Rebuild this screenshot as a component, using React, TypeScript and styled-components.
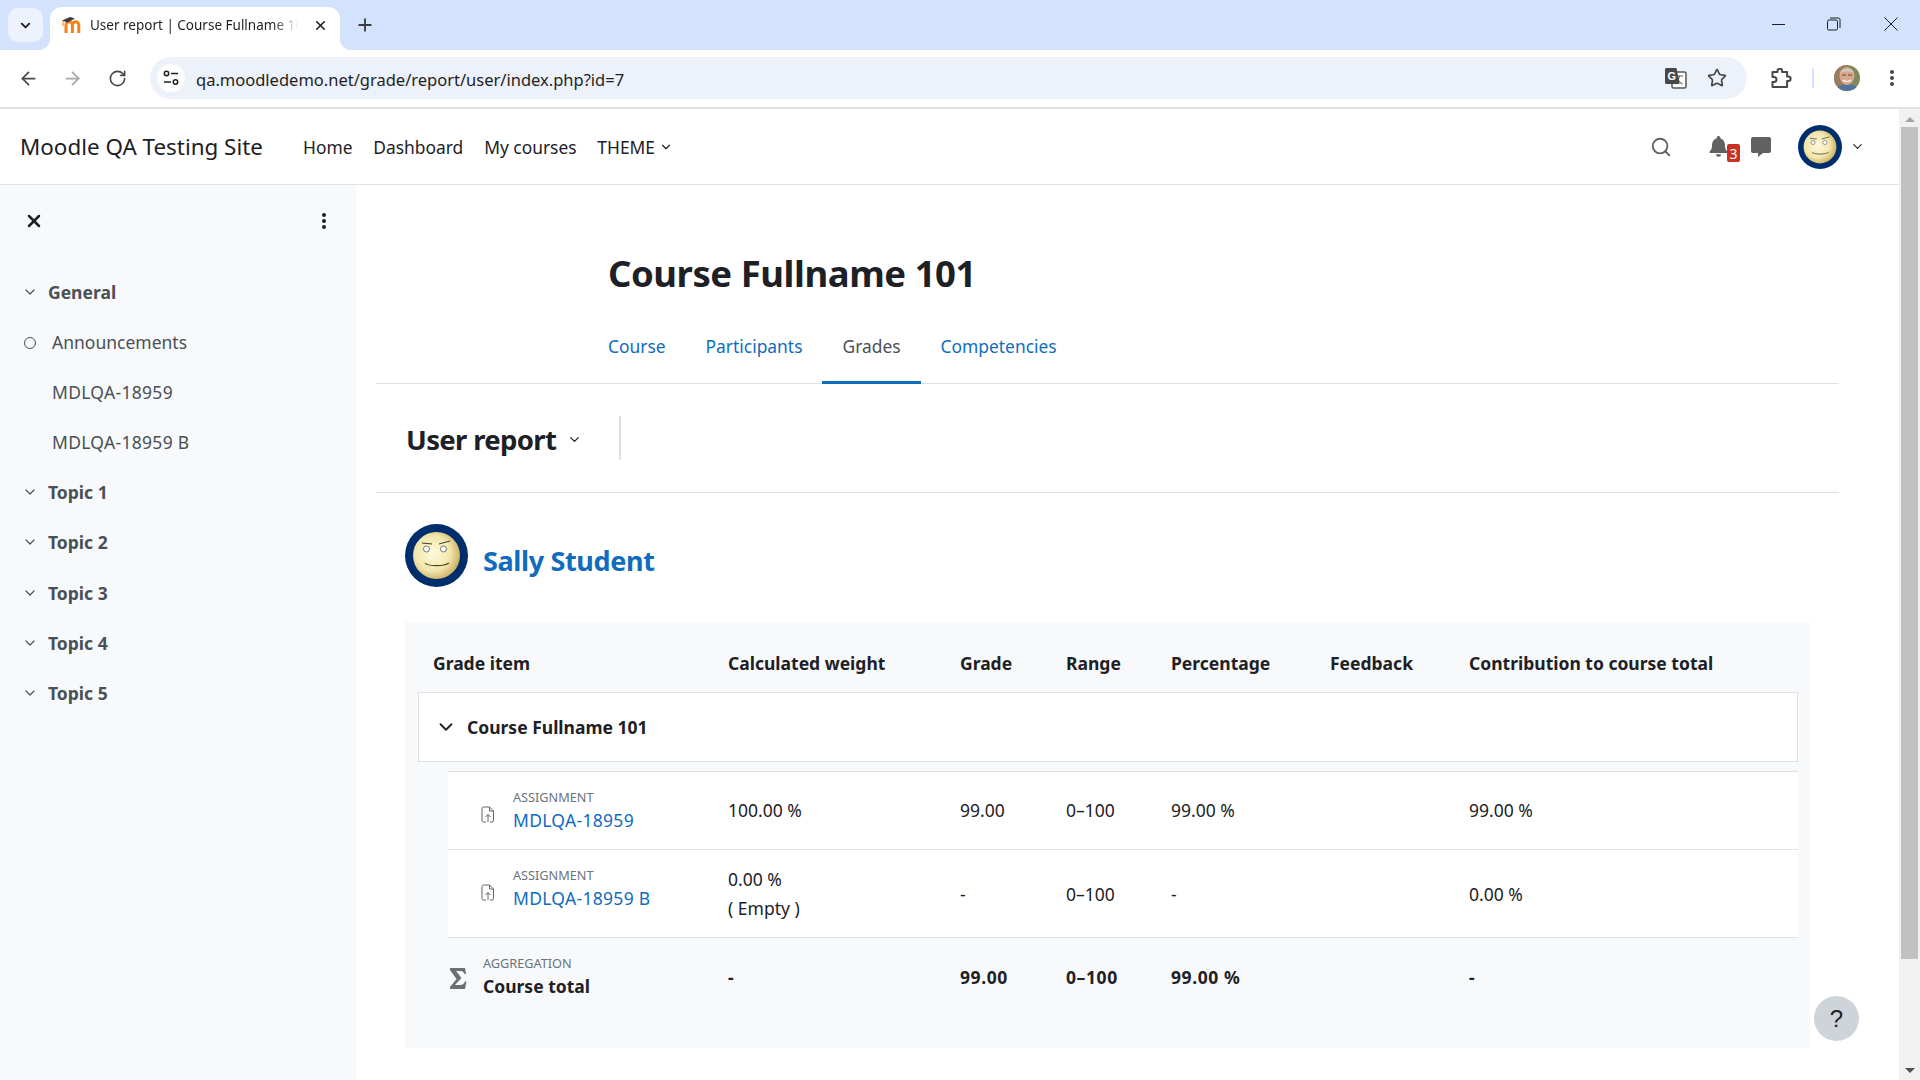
import React from 'react';
import styled, { createGlobalStyle } from 'styled-components';
import { ArrowLeft, ArrowRight, ChevronDown, Plus, RotateCw, Search, Star, X } from 'lucide-react';

const FONT = '"Noto Sans", "Open Sans", sans-serif';

const GlobalStyle = createGlobalStyle`
  html, body {
    margin: 0;
    height: 100%;
    overflow: hidden;
    background: #ffffff;
    color: #1d2125;
    font-family: ${FONT};
  }
  * { box-sizing: border-box; }
`;

const Shell = styled.div`
  display: flex;
  flex-direction: column;
  width: 1920px;
  height: 1080px;
  overflow: hidden;
`;

/* browser chrome */
const TabStrip = styled.div`
  display: flex;
  align-items: flex-start;
  height: 50px;
  padding: 7px 0 0 8px;
  background: #d3e3fd;
`;

const TabSearch = styled.div`
  display: flex;
  align-items: center;
  justify-content: center;
  width: 35px;
  height: 34px;
  margin-top: 1px;
  border-radius: 10px;
  background: #edf2fc;
  color: #1f1f1f;
`;

const Tab = styled.div`
  position: relative;
  display: flex;
  align-items: center;
  width: 290px;
  height: 43px;
  margin-left: 7px;
  padding: 0 12px 7px 10px;
  border-radius: 12px 12px 0 0;
  background: #ffffff;
  &::before, &::after {
    content: '';
    position: absolute;
    bottom: 0;
    width: 12px;
    height: 12px;
  }
  &::before {
    left: -12px;
    background: radial-gradient(circle at 0 0, transparent 12px, #ffffff 12.5px);
  }
  &::after {
    right: -12px;
    background: radial-gradient(circle at 100% 0, transparent 12px, #ffffff 12.5px);
  }
`;

const TabTitle = styled.span`
  flex: 1;
  margin: 0 15px 0 8px;
  overflow: hidden;
  white-space: nowrap;
  font-size: 13.5px;
  color: #1f1f1f;
  -webkit-mask-image: linear-gradient(to right, #000 88%, transparent);
  mask-image: linear-gradient(to right, #000 88%, transparent);
`;

const NewTab = styled.div`
  display: flex;
  align-items: center;
  justify-content: center;
  width: 28px;
  height: 36px;
  margin-left: 11px;
  color: #3b3b3b;
`;

const WindowControls = styled.div`
  display: flex;
  align-items: center;
  height: 34px;
  margin-left: auto;
  padding-right: 22px;
`;

const WindowGlyph = styled.svg<{ $gap?: number }>`
  margin-left: ${(p) => p.$gap ?? 0}px;
  fill: none;
  stroke: #1f1f1f;
  stroke-width: 1;
`;

const Toolbar = styled.div`
  display: flex;
  align-items: center;
  height: 59px;
  padding: 0 18px 1px 17px;
  border-bottom: 2px solid #e3e3e3;
  border-radius: 10px 10px 0 0;
  background: #ffffff;
  color: #474747;
`;

const ToolButton = styled.div<{ $muted?: boolean; $gap?: number }>`
  display: flex;
  align-items: center;
  justify-content: center;
  width: 22px;
  height: 22px;
  margin-left: ${(p) => p.$gap ?? 0}px;
  color: ${(p) => (p.$muted ? '#a8a8a8' : '#474747')};
`;

const AddressBar = styled.div`
  display: flex;
  align-items: center;
  width: 1597px;
  height: 42px;
  margin-left: 22px;
  padding: 0 19px 0 7px;
  border-radius: 21px;
  background: #ecf1fa;
`;

const SiteInfo = styled.div`
  display: flex;
  align-items: center;
  justify-content: center;
  width: 28px;
  height: 28px;
  border-radius: 50%;
  background: #ffffff;
`;

const Url = styled.span`
  flex: 1;
  margin: 2px 0 0 11px;
  font-size: 16.5px;
  color: #1f1f1f;
`;

const ToolDivider = styled.div`
  width: 2px;
  height: 20px;
  margin-left: 20px;
  background: #d3e3fd;
`;

/* page */
const Viewport = styled.div`
  position: relative;
  flex: 1;
  display: flex;
  min-height: 0;
`;

const PageArea = styled.div`
  flex: 1;
  display: flex;
  flex-direction: column;
  min-width: 0;
`;

const Scrollbar = styled.div`
  display: flex;
  flex-direction: column;
  align-items: center;
  width: 21px;
  padding: 0 2px;
  background: #f1f1f1;
`;

const ScrollArrow = styled.div<{ $down?: boolean }>`
  flex: none;
  width: 0;
  height: 0;
  margin: ${(p) => (p.$down ? 'auto 0 7px' : '8px 0 5px')};
  border-left: 5px solid transparent;
  border-right: 5px solid transparent;
  ${(p) => (p.$down ? 'border-top: 5px solid #505050;' : 'border-bottom: 5px solid #a3a3a3;')}
`;

const ScrollThumb = styled.div`
  flex: none;
  width: 17px;
  height: 832px;
  background: #c1c1c1;
`;

const Navbar = styled.header`
  display: flex;
  align-items: center;
  flex: none;
  height: 76px;
  padding: 0 0 0 20px;
  border-bottom: 1.5px solid #dee2e6;
`;

const Brand = styled.div`
  width: 283px;
  font-size: 22.4px;
  color: #1d2125;
`;

const NavLink = styled.a`
  display: flex;
  align-items: center;
  gap: 4px;
  margin-right: 20.8px;
  font-size: 17.4px;
  color: #1d2125;
`;

const NavTools = styled.div`
  display: flex;
  align-items: center;
  margin-left: auto;
  color: #616161;
`;

const IconSlot = styled.div<{ $gap?: number }>`
  position: relative;
  display: flex;
  align-items: center;
  justify-content: center;
  margin-left: ${(p) => p.$gap ?? 0}px;
`;

const Badge = styled.span`
  position: absolute;
  top: 8px;
  right: -12px;
  display: flex;
  align-items: center;
  justify-content: center;
  width: 13px;
  height: 18px;
  border-radius: 2px;
  background: #ca3120;
  color: #ffffff;
  font-size: 14px;
`;

const Layout = styled.div`
  flex: 1;
  display: flex;
  min-height: 0;
`;

const Sidebar = styled.aside`
  flex: none;
  width: 356px;
  background: #f8f9fa;
  color: #495057;
`;

const SidebarHead = styled.div`
  display: flex;
  align-items: center;
  justify-content: space-between;
  height: 82px;
  padding: 0 29px 11px 24px;
  color: #1d2125;
`;

const SectionRow = styled.div`
  display: flex;
  align-items: center;
  gap: 10px;
  height: 50.2px;
  padding-left: 22px;
  font-size: 17.5px;
  font-weight: 700;
`;

const ActivityRow = styled.div<{ $marked?: boolean; $spaced?: boolean }>`
  display: flex;
  align-items: center;
  height: 50px;
  padding-left: ${(p) => (p.$marked ? 24 : 52)}px;
  font-size: 17.5px;
  letter-spacing: ${(p) => (p.$spaced ? 0.3 : 0)}px;
`;

const ActivityDot = styled.span`
  width: 12px;
  height: 12px;
  margin: 2px 16px 0 0;
  border: 1.5px solid #495057;
  border-radius: 50%;
`;

const Main = styled.main`
  flex: 1;
  min-width: 0;
  padding: 0 60px 0 20px;
`;

const CourseHead = styled.div`
  height: 139px;
  padding: 64px 0 0 232px;
`;

const CourseTitle = styled.h1`
  margin: 0;
  font-size: 36.5px;
  line-height: 48px;
  font-weight: 700;
  letter-spacing: -0.45px;
  color: #1d2125;
`;

const Tabs = styled.nav`
  display: flex;
  height: 60px;
  padding-left: 212px;
  border-bottom: 1.5px solid #dee2e6;
`;

const TabLink = styled.a<{ $active?: boolean }>`
  height: 60px;
  padding: 9.5px 20px 0;
  font-size: 17.4px;
  line-height: 24px;
  color: ${(p) => (p.$active ? '#495057' : '#0f6cbf')};
  border-bottom: 3px solid ${(p) => (p.$active ? '#0f6cbf' : 'transparent')};
`;

const ReportBar = styled.div`
  display: flex;
  align-items: center;
  height: 109px;
  padding: 0 0 0 30px;
  border-bottom: 1.5px solid #dee2e6;
`;

const ReportTitle = styled.h2`
  display: flex;
  align-items: center;
  gap: 11px;
  width: 213px;
  margin: 3px 0 0;
  font-size: 27.5px;
  line-height: 36px;
  font-weight: 700;
  letter-spacing: -0.65px;
  color: #1d2125;
`;

const ReportDivider = styled.div`
  width: 1.5px;
  height: 44px;
  background: #dee2e6;
`;

const UserBlock = styled.div`
  display: flex;
  align-items: center;
  gap: 15px;
  padding: 31px 0 35px 29px;
`;

const UserName = styled.a`
  margin-top: 10px;
  font-size: 27px;
  line-height: 40px;
  font-weight: 700;
  letter-spacing: -0.35px;
  color: #0f6cbf;
`;

const Panel = styled.section`
  margin: 0 29px;
  padding: 0 12px 29px 13px;
  background: #f8f9fa;
`;

const GradeGrid = styled.div<{ $lead: number }>`
  display: grid;
  grid-template-columns: ${(p) => p.$lead}px 232px 106px 105px 159px 139px 1fr;
  align-items: center;
  font-size: 17.5px;
`;

const HeaderRow = styled(GradeGrid)`
  height: 70px;
  padding: 12px 0 0 15px;
  font-weight: 700;
`;

const CategoryRow = styled.div`
  display: flex;
  align-items: center;
  gap: 10px;
  height: 70px;
  margin-bottom: 9px;
  padding: 0 0 1px 16px;
  border: 1.5px solid #dee2e6;
  background: #ffffff;
  font-size: 17.5px;
  font-weight: 700;
`;

const ItemRow = styled(GradeGrid)<{ $height: number; $lift?: number }>`
  height: ${(p) => p.$height}px;
  margin-left: 30px;
  padding-bottom: ${(p) => p.$lift ?? 0}px;
  border-top: 1.5px solid #dee2e6;
  background: #ffffff;
`;

const TotalRow = styled(GradeGrid)`
  height: 82px;
  margin-left: 30px;
  padding-bottom: 3px;
  border-top: 1.5px solid #dee2e6;
  font-weight: 700;
`;

const NameCell = styled.div<{ $icon: number; $gap: number }>`
  display: flex;
  align-self: start;
  gap: ${(p) => p.$gap}px;
  padding: 16px 0 0 ${(p) => p.$icon}px;
`;

const ItemGlyph = styled.div<{ $top: number }>`
  flex: none;
  margin-top: ${(p) => p.$top}px;
  color: #5f666c;
`;

const ItemKind = styled.div`
  font-size: 12.7px;
  line-height: 18px;
  font-weight: 400;
  color: #6a737b;
`;

const ItemLink = styled.a`
  display: block;
  font-size: 17.5px;
  line-height: 28px;
  letter-spacing: 0.3px;
  color: #0f6cbf;
`;

const ItemTotal = styled.div`
  font-size: 17.5px;
  line-height: 28px;
  font-weight: 700;
  color: #1d2125;
`;

const WeightStack = styled.div`
  line-height: 29px;
`;

const TotalValue = styled.span`
  letter-spacing: 0.6px;
`;

const HelpButton = styled.div`
  position: absolute;
  right: 61px;
  bottom: 39px;
  display: flex;
  align-items: center;
  justify-content: center;
  width: 45px;
  height: 45px;
  border-radius: 50%;
  background: #ced4da;
  color: #1d2125;
  font-family: "Liberation Sans", sans-serif;
  font-size: 24px;
`;

function Smiley({ size }: { size: number }) {
  const gradId = `face-${size}`;
  return (
    <svg width={size} height={size} viewBox="0 0 63 63">
      <defs>
        <radialGradient id={gradId} cx="42%" cy="45%" r="60%">
          <stop offset="0%" stopColor="#fdf9dc" />
          <stop offset="62%" stopColor="#f3e7ae" />
          <stop offset="100%" stopColor="#c9ad5e" />
        </radialGradient>
      </defs>
      <circle cx="31.5" cy="31.5" r="31.5" fill="#002d6b" />
      <circle cx="31.5" cy="31.5" r="23.5" fill={`url(#${gradId})`} />
      <circle cx="21.5" cy="25" r="3" fill="#fff" stroke="#555" strokeWidth="0.8" />
      <circle cx="38.5" cy="25" r="3" fill="#fff" stroke="#555" strokeWidth="0.8" />
      <path d="M17 19l10 1M34 20l11-3" stroke="#3d3a2c" strokeWidth="1" fill="none" />
      <path d="M20 39c2 3 18 4 24 0" stroke="#4b4528" strokeWidth="1.1" fill="none" />
    </svg>
  );
}

function Favicon() {
  return (
    <svg width="22" height="20" viewBox="0 0 22 20">
      <path
        d="M6 18v-8a3.2 3.2 0 0 1 6.4 0v8M12.4 10a3.2 3.2 0 0 1 6.4 0v8"
        fill="none"
        stroke="#f98012"
        strokeWidth="3"
      />
      <path d="M2 5.500l8-3.500 5 1.500-7.500 4z" fill="#3a3a3a" />
      <path d="M3 6v5" stroke="#f9a65a" strokeWidth="1.500" />
    </svg>
  );
}

function TuneIcon() {
  return (
    <svg width="16" height="16" viewBox="0 0 16 16" fill="none" stroke="#1f1f1f" strokeWidth="1.500">
      <circle cx="3.500" cy="3.500" r="2.200" />
      <path d="M8 3.500h7M1 12h7" />
      <circle cx="12.500" cy="12" r="2.200" />
    </svg>
  );
}

function TranslateIcon() {
  return (
    <svg width="22" height="21" viewBox="0 0 22 21">
      <rect x="7" y="4" width="14" height="16" rx="1.500" fill="#fff" stroke="#555" strokeWidth="1.500" />
      <path d="M11 8h7M14.500 8c-.5 4-2 6-4 8M12.500 11c1 2 3 4 5 5" stroke="#555" strokeWidth="1.100" fill="none" />
      <path d="M1.500 0h10l3 16H1.500A1.500 1.500 0 0 1 0 14.500v-13A1.500 1.500 0 0 1 1.500 0z" fill="#474747" />
      <text x="2.500" y="12" fill="#fff" fontSize="11" fontWeight="700" fontFamily="Liberation Sans, sans-serif">G</text>
    </svg>
  );
}

function PuzzleIcon() {
  return (
    <svg width="21" height="21" viewBox="0 0 21 21" fill="none" stroke="#474747" strokeWidth="2" strokeLinejoin="round">
      <path d="M1.500 4h5V3a2.300 2.300 0 0 1 4.600 0v1h5v4.500h1.200a2.300 2.300 0 0 1 0 4.600h-1.200V19h-14.600v-5h1.500a2.500 2.500 0 0 0 0-5H1.500z" />
    </svg>
  );
}

function ProfilePhoto() {
  return (
    <svg width="26" height="26" viewBox="0 0 26 26">
      <defs>
        <clipPath id="profile-clip">
          <circle cx="13" cy="13" r="13" />
        </clipPath>
      </defs>
      <g clipPath="url(#profile-clip)">
        <rect width="26" height="26" fill="#7c8a5c" />
        <rect x="0" y="0" width="11" height="26" fill="#9b7b62" />
        <path d="M2 26c1-5 5-7 11-7s11 2 11 7z" fill="#53739a" />
        <ellipse cx="13" cy="11" rx="7.500" ry="9" fill="#d8a78c" />
        <path d="M6 8c1-5 12-6 14 0-4-2-10-2-14 0z" fill="#cfc9c0" />
        <path d="M8 10h4M14 10h4" stroke="#5b4a40" strokeWidth="1.200" />
        <path d="M9 15c2 2 6 2 8 0" stroke="#fff" strokeWidth="1.200" fill="none" />
      </g>
    </svg>
  );
}

function BellIcon() {
  return (
    <svg width="19" height="21" viewBox="0 0 19 21" fill="#616161">
      <path d="M9.500 0a1.800 1.800 0 0 1 1.800 1.800v.4c3 .8 4.700 3.400 4.700 6.800 0 4 1 5 2.400 6.500.4.500.1 1.500-.8 1.500H1.400c-.9 0-1.200-1-.8-1.500C2 14 3 13 3 9c0-3.400 1.700-6 4.700-6.800v-.4A1.800 1.800 0 0 1 9.500 0z" />
      <path d="M7 18.300h5a2.500 2.500 0 0 1-5 0z" />
    </svg>
  );
}

function MessageIcon() {
  return (
    <svg width="20" height="20" viewBox="0 0 20 20" fill="#616161">
      <path d="M2 0h16a2 2 0 0 1 2 2v12a2 2 0 0 1-2 2h-6l-5 4v-4H2a2 2 0 0 1-2-2V2a2 2 0 0 1 2-2z" />
    </svg>
  );
}

function AssignIcon() {
  return (
    <svg width="14" height="17" viewBox="0 0 14 17" fill="none" stroke="currentColor" strokeWidth="1">
      <path d="M2.500 1h6l4 4v9.500a1.500 1.500 0 0 1-1.500 1.500H9M5 16H2.500A1.500 1.500 0 0 1 1 14.500v-12A1.500 1.500 0 0 1 2.500 1M8.500 1v4h4" />
      <path d="M7 16V8.500M4.500 11L7 8.500 9.500 11" />
    </svg>
  );
}

function SigmaIcon() {
  return (
    <svg width="17" height="21" viewBox="0 0 17 21" fill="#6d6f72">
      <path d="M0 0h15l1 6h-1.500c-1-2.500-2.500-3-5-3H6l5.500 7L5 17h5c2.500 0 4-1 5-3.500h1.500L15 21H0v-2l6.500-8L0 2z" />
    </svg>
  );
}

function KebabIcon({ color }: { color: string }) {
  return (
    <svg width="6" height="18" viewBox="0 0 6 18" fill={color}>
      <circle cx="3" cy="3" r="2" />
      <circle cx="3" cy="9" r="2" />
      <circle cx="3" cy="15" r="2" />
    </svg>
  );
}

const SECTIONS_AFTER = ['Topic 1', 'Topic 2', 'Topic 3', 'Topic 4', 'Topic 5'];

function Section({ name }: { name: string }) {
  return (
    <SectionRow>
      <ChevronDown size={16} strokeWidth={1.8} />
      {name}
    </SectionRow>
  );
}

export default function App() {
  return (
    <Shell>
      <GlobalStyle />
      <TabStrip>
        <TabSearch>
          <ChevronDown size={15} strokeWidth={3} />
        </TabSearch>
        <Tab>
          <Favicon />
          <TabTitle>User report | Course Fullname 101</TabTitle>
          <X size={15} strokeWidth={2.6} color="#1f1f1f" />
        </Tab>
        <NewTab>
          <Plus size={20} strokeWidth={2.2} />
        </NewTab>
        <WindowControls>
          <WindowGlyph width="14" height="14" viewBox="0 0 14 14"><path d="M0 7.500h13" /></WindowGlyph>
          <WindowGlyph $gap={41} width="14" height="14" viewBox="0 0 14 14"><rect x="0.500" y="3" width="10" height="10" rx="1.500" /><path d="M3 1h8.500A1.500 1.500 0 0 1 13 2.500V11" /></WindowGlyph>
          <WindowGlyph $gap={43} width="14" height="14" viewBox="0 0 14 14"><path d="M.5.500l13 13M13.500.500l-13 13" /></WindowGlyph>
        </WindowControls>
      </TabStrip>
      <Toolbar>
        <ToolButton><ArrowLeft size={21} strokeWidth={2} /></ToolButton>
        <ToolButton $muted $gap={22}><ArrowRight size={21} strokeWidth={2} /></ToolButton>
        <ToolButton $gap={23}><RotateCw size={19} strokeWidth={2} /></ToolButton>
        <AddressBar>
          <SiteInfo><TuneIcon /></SiteInfo>
          <Url>qa.moodledemo.net/grade/report/user/index.php?id=7</Url>
          <ToolButton><TranslateIcon /></ToolButton>
          <ToolButton $gap={19}><Star size={20} strokeWidth={2} /></ToolButton>
        </AddressBar>
        <ToolButton $gap={23}><PuzzleIcon /></ToolButton>
        <ToolDivider />
        <IconSlot $gap={20}><ProfilePhoto /></IconSlot>
        <IconSlot $gap={29}><KebabIcon color="#474747" /></IconSlot>
      </Toolbar>
      <Viewport>
        <PageArea>
          <Navbar>
            <Brand>Moodle QA Testing Site</Brand>
            <NavLink>Home</NavLink>
            <NavLink>Dashboard</NavLink>
            <NavLink>My courses</NavLink>
            <NavLink>THEME <ChevronDown size={14} strokeWidth={2} /></NavLink>
            <NavTools>
              <Search size={22} strokeWidth={2} />
              <IconSlot $gap={37}><BellIcon /><Badge>3</Badge></IconSlot>
              <IconSlot $gap={23}><MessageIcon /></IconSlot>
              <IconSlot $gap={27}><Smiley size={44} /></IconSlot>
              <IconSlot $gap={8}>
                <ChevronDown size={15} strokeWidth={1.8} color="#1d2125" />
              </IconSlot>
              <IconSlot $gap={34} />
            </NavTools>
          </Navbar>
          <Layout>
            <Sidebar>
              <SidebarHead>
                <X size={20} strokeWidth={3} />
                <KebabIcon color="#1d2125" />
              </SidebarHead>
              <Section name="General" />
              <ActivityRow $marked><ActivityDot />Announcements</ActivityRow>
              <ActivityRow $spaced>MDLQA-18959</ActivityRow>
              <ActivityRow $spaced>MDLQA-18959 B</ActivityRow>
              {SECTIONS_AFTER.map((name) => <Section key={name} name={name} />)}
            </Sidebar>
            <Main>
              <CourseHead>
                <CourseTitle>Course Fullname 101</CourseTitle>
              </CourseHead>
              <Tabs>
                <TabLink>Course</TabLink>
                <TabLink>Participants</TabLink>
                <TabLink $active>Grades</TabLink>
                <TabLink>Competencies</TabLink>
              </Tabs>
              <ReportBar>
                <ReportTitle>User report <ChevronDown size={15} strokeWidth={2} /></ReportTitle>
                <ReportDivider />
              </ReportBar>
              <UserBlock>
                <Smiley size={63} />
                <UserName>Sally Student</UserName>
              </UserBlock>
              <Panel>
                <HeaderRow $lead={295}>
                  <span>Grade item</span>
                  <span>Calculated weight</span>
                  <span>Grade</span>
                  <span>Range</span>
                  <span>Percentage</span>
                  <span>Feedback</span>
                  <span>Contribution to course total</span>
                </HeaderRow>
                <CategoryRow>
                  <ChevronDown size={22} strokeWidth={2} />
                  Course Fullname 101
                </CategoryRow>
                <ItemRow $lead={280} $height={78} $lift={2}>
                  <NameCell $icon={33} $gap={18}>
                    <ItemGlyph $top={16}><AssignIcon /></ItemGlyph>
                    <div>
                      <ItemKind>ASSIGNMENT</ItemKind>
                      <ItemLink>MDLQA-18959</ItemLink>
                    </div>
                  </NameCell>
                  <span>100.00 %</span>
                  <span>99.00</span>
                  <span>0–100</span>
                  <span>99.00 %</span>
                  <span />
                  <span>99.00 %</span>
                </ItemRow>
                <ItemRow $lead={280} $height={88}>
                  <NameCell $icon={33} $gap={18}>
                    <ItemGlyph $top={16}><AssignIcon /></ItemGlyph>
                    <div>
                      <ItemKind>ASSIGNMENT</ItemKind>
                      <ItemLink>MDLQA-18959 B</ItemLink>
                    </div>
                  </NameCell>
                  <WeightStack>0.00 %<br />( Empty )</WeightStack>
                  <span>-</span>
                  <span>0–100</span>
                  <span>-</span>
                  <span />
                  <span>0.00 %</span>
                </ItemRow>
                <TotalRow $lead={280}>
                  <NameCell $icon={2} $gap={16}>
                    <ItemGlyph $top={14}><SigmaIcon /></ItemGlyph>
                    <div>
                      <ItemKind>AGGREGATION</ItemKind>
                      <ItemTotal>Course total</ItemTotal>
                    </div>
                  </NameCell>
                  <span>-</span>
                  <TotalValue>99.00</TotalValue>
                  <TotalValue>0–100</TotalValue>
                  <TotalValue>99.00 %</TotalValue>
                  <span />
                  <span>-</span>
                </TotalRow>
              </Panel>
            </Main>
          </Layout>
        </PageArea>
        <Scrollbar>
          <ScrollArrow />
          <ScrollThumb />
          <ScrollArrow $down />
        </Scrollbar>
        <HelpButton>?</HelpButton>
      </Viewport>
    </Shell>
  );
}
